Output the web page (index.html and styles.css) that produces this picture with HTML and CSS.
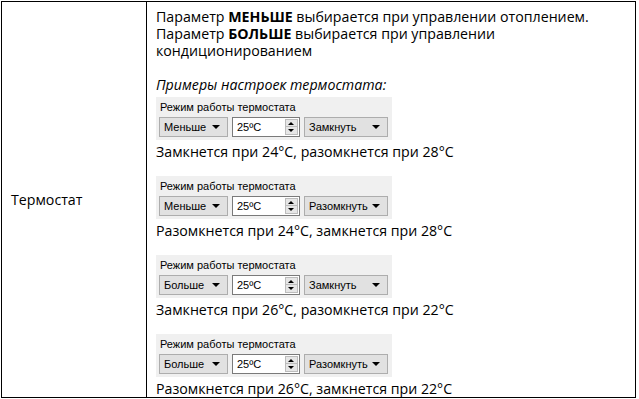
FILE: index.html
```html
<!DOCTYPE HTML>
<html>
<head>
<meta charset="utf-8">
<title>Термостат</title>
<link rel="stylesheet" href="styles.css">
</head>
<body>
	<table class="params">
		<tr>
			<td class="name">Термостат</td>
			<td class="desc">
				<p>Параметр <b>МЕНЬШЕ</b> выбирается при управлении отоплением.<br>
				Параметр <b>БОЛЬШЕ</b> выбирается при управлении<br>кондиционированием</p>
				<p class="gap"><i>Примеры настроек термостата:</i></p>

				<div class="example">
					<div class="group">
						<div class="group-title">Режим работы термостата</div>
						<div class="controls">
							<div class="combo mode">Меньше<span class="arrow"></span></div>
							<div class="spin"><span>25ºC</span><span class="spin-btn"><i class="up"></i><i class="down"></i></span></div>
							<div class="combo action">Замкнуть<span class="arrow"></span></div>
						</div>
					</div>
					<p>Замкнется при 24°C, разомкнется при 28°C</p>
				</div>

				<div class="example">
					<div class="group">
						<div class="group-title">Режим работы термостата</div>
						<div class="controls">
							<div class="combo mode">Меньше<span class="arrow"></span></div>
							<div class="spin"><span>25ºC</span><span class="spin-btn"><i class="up"></i><i class="down"></i></span></div>
							<div class="combo action">Разомкнуть<span class="arrow"></span></div>
						</div>
					</div>
					<p>Разомкнется при 24°C, замкнется при 28°C</p>
				</div>

				<div class="example">
					<div class="group">
						<div class="group-title">Режим работы термостата</div>
						<div class="controls">
							<div class="combo mode">Больше<span class="arrow"></span></div>
							<div class="spin"><span>25ºC</span><span class="spin-btn"><i class="up"></i><i class="down"></i></span></div>
							<div class="combo action">Замкнуть<span class="arrow"></span></div>
						</div>
					</div>
					<p>Замкнется при 26°C, разомкнется при 22°C</p>
				</div>

				<div class="example">
					<div class="group">
						<div class="group-title">Режим работы термостата</div>
						<div class="controls">
							<div class="combo mode">Больше<span class="arrow"></span></div>
							<div class="spin"><span>25ºC</span><span class="spin-btn"><i class="up"></i><i class="down"></i></span></div>
							<div class="combo action">Разомкнуть<span class="arrow"></span></div>
						</div>
					</div>
					<p>Разомкнется при 26°C, замкнется при 22°C</p>
				</div>
			</td>
		</tr>
	</table>
</body>
</html>
```

FILE: styles.css
```css
html, body{margin: 0;padding: 0;background: #fff;}
body{
	padding: 1px 0 0 1px;
	font-family: "Open Sans", "Noto Sans", sans-serif;
	font-size: 14.2px;
	color: #000;
}
p{margin: 0;}
.params{
	border-collapse: collapse;
	width: 635px;
}
.params td{
	border: 1px solid #000;
	padding: 0;
}
.name{
	width: 135px;
	padding-left: 9px !important;
	vertical-align: middle;
}
.desc{
	padding: 6px 0 0 9px !important;
	line-height: 17px;
	vertical-align: top;
}
.gap{margin-top: 17px;}
.example{margin-top: 4px;}
.example + .example{margin-top: 16px;}
.example p{margin-top: 3px;}

/* группа настроек в стиле окна Windows */
.group{
	width: 229px;
	padding: 3px 4px 3px 3px;
	background: #f0f0f0;
	font-family: "Liberation Sans", Arial, sans-serif;
	font-size: 11px;
	line-height: 14px;
	color: #000;
}
.group-title{padding-left: 1px;height: 17px;}
.controls{display: flex;gap: 4px;}
.combo, .spin{
	position: relative;
	box-sizing: border-box;
	height: 20px;
	line-height: 18px;
	font-size: 11px;
}
.combo{
	background: #e1e1e1;
	border: 1px solid #adadad;
	padding-left: 4px;
}
.mode{width: 69px;}
.action{width: 84px;}
.arrow{
	position: absolute;
	right: 7px;
	top: 7px;
	border-left: 4px solid transparent;
	border-right: 4px solid transparent;
	border-top: 4px solid #000;
}
.spin{
	width: 68px;
	background: #fff;
	border: 1px solid #7a7a7a;
	padding-left: 4px;
}
.spin-btn{
	position: absolute;
	right: 1px;
	top: 1px;
	width: 13px;
	height: 16px;
	background: #e6e6e6;
	border: 1px solid #bcbcbc;
	box-sizing: border-box;
}
.spin-btn i{
	position: absolute;
	left: 2px;
	border-left: 3px solid transparent;
	border-right: 3px solid transparent;
}
.spin-btn .up{top: 2px;border-bottom: 3px solid #000;}
.spin-btn .down{bottom: 2px;border-top: 3px solid #000;}
.spin-btn::after{
	content: "";
	position: absolute;
	left: 0;
	right: 0;
	top: 6px;
	border-top: 1px solid #bcbcbc;
}
```
